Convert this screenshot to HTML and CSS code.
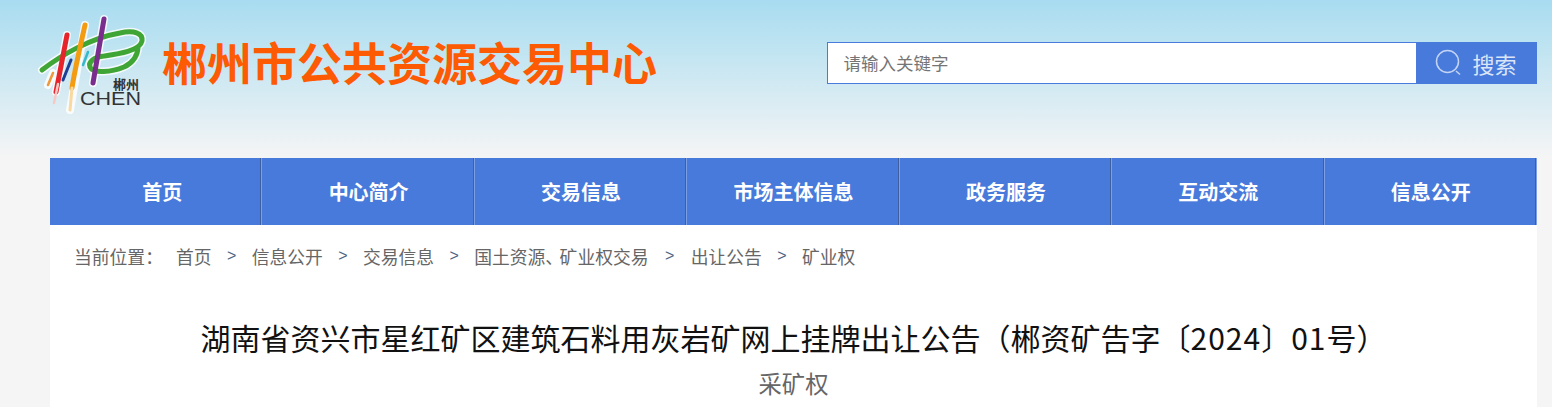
FILE: index.html
```html
<!DOCTYPE html>
<html lang="zh-CN">
<head>
<meta charset="utf-8">
<title>郴州市公共资源交易中心</title>
<link rel="stylesheet" href="styles.css">
</head>
<body>
<header class="header">
  <svg class="logo" viewBox="37 15 110 100" width="110" height="100" aria-hidden="true">
    <path class="halo" d="M42 70 C60 56 90 38 120 33 C134 30 143 33 142 41 C140 51 118 54 104 56 C94 57 88 62 90 67 C93 74 112 72 124 67 C133 63 138 55 138 47" />
    <path class="halo" d="M67 35 L56 92 M85 25 L70 110 M104 19 L93 83 M53 73 L48 85" />
    <path d="M42 70 C60 56 90 38 120 33 C134 30 143 33 142 41 C140 51 118 54 104 56 C94 57 88 62 90 67 C93 74 112 72 124 67 C133 63 138 55 138 47" fill="none" stroke="#3fa535" stroke-width="5" stroke-linecap="round"/>
    <path d="M53 73 L48 85" stroke="#f0973a" stroke-width="2.5" stroke-linecap="round"/>
    <path d="M67 35 L56 92" stroke="#e5252b" stroke-width="5" stroke-linecap="round"/>
    <path d="M71 60 L63 80" stroke="#1d3f96" stroke-width="3" stroke-linecap="round"/>
    <path d="M85 25 C80 48 75 68 72 88" stroke="#f39c12" stroke-width="5" stroke-linecap="round" fill="none"/>
    <path d="M72 88 L70 110" stroke="#f9d9a0" stroke-width="3" stroke-linecap="round"/>
    <path d="M58 84 L54 103" stroke="#f6c9c4" stroke-width="2.5" stroke-linecap="round"/>
    <path d="M88 52 L83 65" stroke="#35b8c8" stroke-width="2.5" stroke-linecap="round"/>
    <path d="M104 19 L93 83" stroke="#7b2d8e" stroke-width="5" stroke-linecap="round"/>
    <text class="logo-small" x="113" y="89">郴州</text>
    <text class="logo-chen" x="80" y="105" textLength="61" lengthAdjust="spacingAndGlyphs">CHEN</text>
  </svg>
  <h1 class="site-title">郴州市公共资源交易中心</h1>
  <form class="search">
    <input class="search-input" type="text" placeholder="请输入关键字">
    <button class="search-btn" type="button">
      <svg viewBox="0 0 28 28" width="28" height="28" aria-hidden="true"><circle cx="12.5" cy="12.5" r="11" fill="none" stroke="#c3d3f2" stroke-width="1.5"/><path d="M21 22 L25 25.5" stroke="#c3d3f2" stroke-width="1.5"/></svg>
      <span>搜索</span>
    </button>
  </form>
</header>
<nav class="nav">
  <a class="nav-item nav-first">首页</a>
  <a class="nav-item">中心简介</a>
  <a class="nav-item">交易信息</a>
  <a class="nav-item">市场主体信息</a>
  <a class="nav-item">政务服务</a>
  <a class="nav-item">互动交流</a>
  <a class="nav-item">信息公开</a>
</nav>
<main class="content">
  <div class="crumbs">
    <span class="crumb-label">当前位置&#xFF1A;</span>
    <a>首页</a><i>&gt;</i><a>信息公开</a><i>&gt;</i><a>交易信息</a><i>&gt;</i><a>国土资源<span class="tight">、</span>矿业权交易</a><i class="wide">&gt;</i><a>出让公告</a><i>&gt;</i><a>矿业权</a>
  </div>
  <h2 class="title">湖南省资兴市星红矿区建筑石料用灰岩矿网上挂牌出让公告&#xFF08;郴资矿告字〔<span class="num">2024</span>〕<span class="num">01</span>号&#xFF09;</h2>
  <div class="subtitle">采矿权</div>
</main>
</body>
</html>
```
FILE: styles.css
```css
* { box-sizing: border-box; }
html, body { margin: 0; height: 407px; overflow: hidden; }
body {
  background: linear-gradient(#a8dcf0 0, #f5f5f5 158px);
  background-repeat: no-repeat;
  background-color: #f5f5f5;
  font-family: "Microsoft YaHei", "Noto Sans CJK SC", sans-serif;
}
.header { height: 158px; display: flex; align-items: flex-start; padding: 15px 15px 0 37px; }
.logo { flex: none; margin-right: 15px; }
.halo { fill: none; stroke: #fff; stroke-opacity: .8; stroke-width: 8; stroke-linecap: round; }
.logo-small { font-size: 13px; font-weight: 700; fill: #333; }
.logo-chen { font-family: "Liberation Sans", sans-serif; font-size: 18px; fill: #333; }
.site-title { margin: 12px 0 0; font-size: 45px; line-height: 70px; font-weight: 700; color: #fd5a04; white-space: nowrap; }
.search { margin: 27px 0 0 auto; display: flex; width: 710px; height: 42px; }
.search-input { flex: 1; border: 1px solid #4a7bdc; padding: 0 15.5px 2px; font: 17.5px "Noto Sans CJK SC", sans-serif; background: #fff; outline: 0; }
.search-input::placeholder { color: #757575; opacity: 1; }
.search-btn { flex: none; width: 120px; border: 0; background: #487adb; color: #dbe5f8; display: flex; align-items: center; justify-content: center; gap: 9px; padding: 0 2px 0 0; font: 22px "Noto Sans CJK SC", sans-serif; }
.nav { display: grid; grid-template-columns: repeat(7, 1fr); margin: 0 15px 0 50px; height: 67px; background: #487adb; }
.nav-item { display: flex; align-items: center; justify-content: center; color: #fff; font-size: 20px; font-weight: 700; box-shadow: inset -1px 0 0 #7e9ee4, inset -2px 0 0 #3f5f9f; }
.nav-first { padding-left: 12px; }
.content { margin: 0 15px 0 50px; background: #fff; height: 182px; }
.crumbs { padding: 17px 0 0 24px; display: flex; align-items: center; font-size: 17.8px; line-height: 28px; color: #666; white-space: nowrap; }
.crumb-label { margin-right: 13px; }
.tight { letter-spacing: -3.5px; }
.crumbs i { font-style: normal; margin: 0 15.4px; color: #4d6484; font-family: "Liberation Sans", sans-serif; font-size: 16px; }
.crumbs .wide { margin: 0 16.4px; }
.title { margin: 45px 0 0; text-align: center; font-size: 30px; line-height: 44px; font-weight: 400; color: #111; white-space: nowrap; }
.num { letter-spacing: 1px; }
.subtitle { margin-top: 2px; text-align: center; font-size: 23.3px; line-height: 44px; color: #666; }
```
